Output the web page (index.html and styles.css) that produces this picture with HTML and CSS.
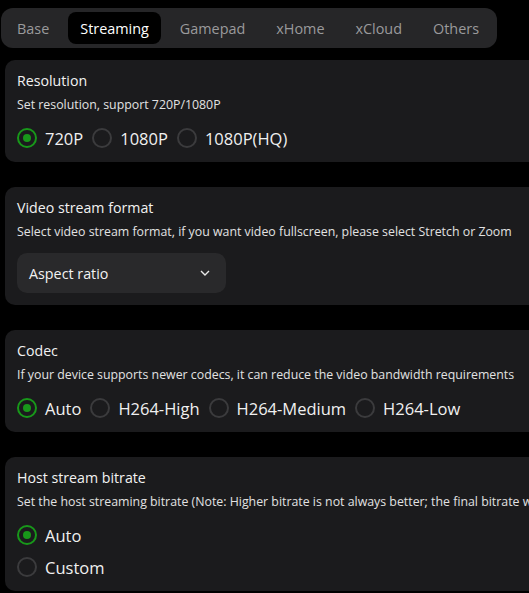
FILE: index.html
```html
<!DOCTYPE html>
<html lang="en">
<head>
<meta charset="utf-8">
<title>Settings - Streaming</title>
<link rel="stylesheet" href="styles.css">
</head>
<body>
<div class="page">
  <nav class="tabs">
    <span class="tab">Base</span>
    <span class="tab active">Streaming</span>
    <span class="tab">Gamepad</span>
    <span class="tab">xHome</span>
    <span class="tab">xCloud</span>
    <span class="tab">Others</span>
  </nav>

  <section class="card">
    <div class="title">Resolution</div>
    <div class="desc">Set resolution, support 720P/1080P</div>
    <div class="radios">
      <label class="radio checked"><span class="dot"></span>720P</label>
      <label class="radio"><span class="dot"></span>1080P</label>
      <label class="radio"><span class="dot"></span>1080P(HQ)</label>
    </div>
  </section>

  <section class="card">
    <div class="title">Video stream format</div>
    <div class="desc">Select video stream format, if you want video fullscreen, please select Stretch or Zoom</div>
    <div class="select">
      <span>Aspect ratio</span>
      <svg class="chev" width="10" height="6" viewBox="0 0 10 6"><path d="M1 1 L5 5 L9 1" fill="none" stroke="#e8e8e8" stroke-width="1.4"/></svg>
    </div>
  </section>

  <section class="card">
    <div class="title">Codec</div>
    <div class="desc">If your device supports newer codecs, it can reduce the video bandwidth requirements</div>
    <div class="radios">
      <label class="radio checked"><span class="dot"></span>Auto</label>
      <label class="radio"><span class="dot"></span>H264-High</label>
      <label class="radio"><span class="dot"></span>H264-Medium</label>
      <label class="radio"><span class="dot"></span>H264-Low</label>
    </div>
  </section>

  <section class="card">
    <div class="title">Host stream bitrate</div>
    <div class="desc">Set the host streaming bitrate (Note: Higher bitrate is not always better; the final bitrate will be decided by the host and network)</div>
    <div class="radios column">
      <label class="radio checked"><span class="dot"></span>Auto</label>
      <label class="radio"><span class="dot"></span>Custom</label>
    </div>
  </section>
</div>
</body>
</html>
```

FILE: styles.css
```css
html, body {
  margin: 0;
  padding: 0;
  background: #000;
  overflow: hidden;
}
body {
  font-family: "Open Sans", "Noto Sans", sans-serif;
  color: #ececec;
}
.page {
  width: 640px;
  padding: 8px 0 0 1px;
  display: flex;
  flex-direction: column;
  align-items: flex-start;
}
.tabs {
  display: flex;
  gap: 7px;
  padding: 4px 6px 4px 4px;
  height: 32px;
  background: #262628;
  border-radius: 12px;
}
.tab {
  display: flex;
  align-items: center;
  padding: 0 12px;
  border-radius: 8px;
  font-size: 14.4px;
  color: #9a9a9c;
}
.tab.active {
  background: #000;
  color: #fff;
}
.card {
  align-self: stretch;
  margin: 12px 0 13px 4px;
  background: #1b1b1d;
  border-radius: 10px;
  padding: 10px 12px 8px;
  white-space: nowrap;
}
.card + .card { margin-top: 12px; }
.title {
  font-size: 14.2px;
  line-height: 22px;
  color: #f2f2f2;
}
.desc {
  margin-top: 4px;
  font-size: 12.35px;
  line-height: 18px;
  color: #e2e2e2;
}
.radios {
  margin-top: 8px;
  display: flex;
}
.radios.column { flex-direction: column; }
.radio {
  height: 32px;
  display: flex;
  align-items: center;
  gap: 8px;
  margin-right: 9px;
  font-size: 16.5px;
  color: #f0f0f0;
}
.dot {
  box-sizing: border-box;
  width: 20px;
  height: 20px;
  border-radius: 50%;
  border: 2px solid #3b3b3d;
  display: flex;
  align-items: center;
  justify-content: center;
}
.radio.checked .dot { border-color: #18981a; }
.radio.checked .dot::after {
  content: "";
  width: 8px;
  height: 8px;
  border-radius: 50%;
  background: #18981a;
}
.select {
  margin: 12px 0 4px;
  width: 209px;
  height: 40px;
  box-sizing: border-box;
  padding: 0 12px;
  background: #29292b;
  border-radius: 10px;
  display: flex;
  align-items: center;
  justify-content: space-between;
  font-size: 14.3px;
  color: #f2f2f2;
}
.chev { margin-right: 4px; }
```
